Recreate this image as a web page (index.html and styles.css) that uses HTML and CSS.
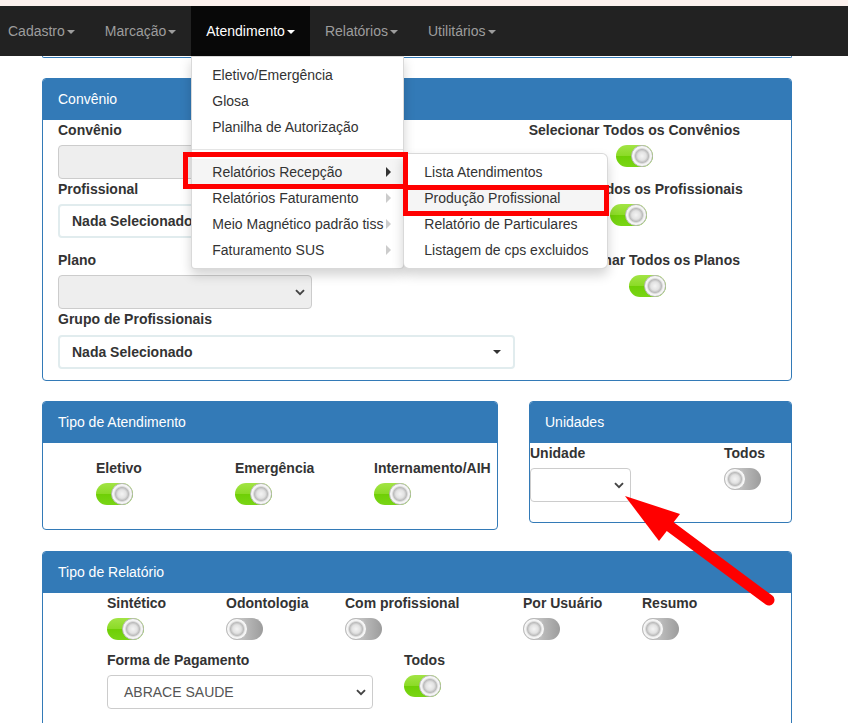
FILE: index.html
```html
<!DOCTYPE html>
<html lang="pt-BR">
<head>
<meta charset="utf-8">
<title>Atendimento - Produção Profissional</title>
<link rel="stylesheet" href="styles.css">
</head>
<body>
<div class="topstrip"></div>
<nav class="navbar">
  <ul class="nav">
    <li class="nav-item first"><a>Cadastro<span class="caret"></span></a></li>
    <li class="nav-item"><a>Marcação<span class="caret"></span></a></li>
    <li class="nav-item active"><a>Atendimento<span class="caret"></span></a>
      <ul class="dropdown">
        <li><a>Eletivo/Emergência</a></li>
        <li><a>Glosa</a></li>
        <li><a>Planilha de Autorização</a></li>
        <li class="divider"></li>
        <li class="sub hover"><a>Relatórios Recepção<span class="subcaret dark"></span></a>
          <ul class="dropdown submenu">
            <li><a>Lista Atendimentos</a></li>
            <li class="hover"><a>Produção Profissional</a></li>
            <li><a>Relatório de Particulares</a></li>
            <li><a>Listagem de cps excluidos</a></li>
          </ul>
        </li>
        <li class="sub"><a>Relatórios Faturamento<span class="subcaret"></span></a></li>
        <li class="sub"><a>Meio Magnético padrão tiss<span class="subcaret"></span></a></li>
        <li class="sub"><a>Faturamento SUS<span class="subcaret"></span></a></li>
      </ul>
    </li>
    <li class="nav-item"><a>Relatórios<span class="caret"></span></a></li>
    <li class="nav-item"><a>Utilitários<span class="caret"></span></a></li>
  </ul>
</nav>

<main class="page">
  <div class="panel-tail"></div>

  <section class="panel conv">
    <div class="panel-heading">Convênio</div>
    <div class="panel-body conv-body">
      <div class="conv-row r1">
        <div class="field">
          <label class="lbl">Convênio</label>
          <div class="control disabled w254"></div>
        </div>
        <div class="switch-block">
          <label class="lbl">Selecionar Todos os Convênios</label>
          <span class="toggle on"><span class="knob"></span></span>
        </div>
      </div>
      <div class="conv-row r2">
        <div class="field">
          <label class="lbl">Profissional</label>
          <div class="bs-select w457"><span>Nada Selecionado</span><span class="bs-caret"></span></div>
        </div>
        <div class="switch-block">
          <label class="lbl">Selecionar Todos os Profissionais</label>
          <span class="toggle on"><span class="knob"></span></span>
        </div>
      </div>
      <div class="conv-row r3">
        <div class="field">
          <label class="lbl">Plano</label>
          <div class="control disabled w254"><svg class="chev" width="10" height="7" viewBox="0 0 10 7"><path d="M1 1.2 L5 5.2 L9 1.2" fill="none" stroke="#444" stroke-width="1.9"/></svg></div>
        </div>
        <div class="switch-block">
          <label class="lbl">Selecionar Todos os Planos</label>
          <span class="toggle on"><span class="knob"></span></span>
        </div>
      </div>
      <div class="conv-row r4">
        <div class="field">
          <label class="lbl">Grupo de Profissionais</label>
          <div class="bs-select w457"><span>Nada Selecionado</span><span class="bs-caret"></span></div>
        </div>
      </div>
    </div>
  </section>

  <div class="panel-pair">
    <section class="panel atend">
      <div class="panel-heading">Tipo de Atendimento</div>
      <div class="panel-body atend-body">
        <div class="sw"><label class="lbl">Eletivo</label><span class="toggle on"><span class="knob"></span></span></div>
        <div class="sw"><label class="lbl">Emergência</label><span class="toggle on"><span class="knob"></span></span></div>
        <div class="sw"><label class="lbl">Internamento/AIH</label><span class="toggle on"><span class="knob"></span></span></div>
      </div>
    </section>
    <section class="panel unid">
      <div class="panel-heading">Unidades</div>
      <div class="panel-body unid-body">
        <div class="sw">
          <label class="lbl">Unidade</label>
          <div class="control w101"><svg class="chev" width="10" height="7" viewBox="0 0 10 7"><path d="M1 1.2 L5 5.2 L9 1.2" fill="none" stroke="#444" stroke-width="1.9"/></svg></div>
        </div>
        <div class="sw">
          <label class="lbl">Todos</label>
          <span class="toggle off"><span class="knob"></span></span>
        </div>
      </div>
    </section>
  </div>

  <section class="panel rel">
    <div class="panel-heading">Tipo de Relatório</div>
    <div class="panel-body rel-body">
      <div class="rel-row1">
        <div class="sw"><label class="lbl">Sintético</label><span class="toggle on"><span class="knob"></span></span></div>
        <div class="sw"><label class="lbl">Odontologia</label><span class="toggle off"><span class="knob"></span></span></div>
        <div class="sw"><label class="lbl">Com profissional</label><span class="toggle off"><span class="knob"></span></span></div>
        <div class="sw"><label class="lbl">Por Usuário</label><span class="toggle off"><span class="knob"></span></span></div>
        <div class="sw"><label class="lbl">Resumo</label><span class="toggle off"><span class="knob"></span></span></div>
      </div>
      <div class="rel-row2">
        <div class="sw pay">
          <label class="lbl">Forma de Pagamento</label>
          <div class="control w266 valued">ABRACE SAUDE<svg class="chev" width="10" height="7" viewBox="0 0 10 7"><path d="M1 1.2 L5 5.2 L9 1.2" fill="none" stroke="#444" stroke-width="1.9"/></svg></div>
        </div>
        <div class="sw">
          <label class="lbl">Todos</label>
          <span class="toggle on"><span class="knob"></span></span>
        </div>
      </div>
    </div>
  </section>
</main>

<div class="annot">
  <div class="redbox box1"></div>
  <div class="redbox box2"></div>
  <svg class="arrow" width="848" height="723" viewBox="0 0 848 723">
    <line x1="668" y1="525" x2="769" y2="600" stroke="#ff0000" stroke-width="11" stroke-linecap="round"/>
    <polygon points="625,496 680,514 659,541" fill="#ff0000"/>
  </svg>
</div>
</body>
</html>
```

FILE: styles.css
```css
* { box-sizing: border-box; }
html, body { margin: 0; padding: 0; background: #fff; }
body {
  font-family: "Liberation Sans", Arial, Helvetica, sans-serif;
  font-size: 14px;
  line-height: 20px;
  color: #333;
  height: 723px;
  overflow: hidden;
}
ul { list-style: none; margin: 0; padding: 0; }

.topstrip { height: 6px; background: #fcf1ee; }

.navbar {
  height: 50px;
  background: #222;
  position: relative;
  z-index: 10;
}
.nav { display: flex; height: 50px; }
.nav-item { position: relative; }
.nav-item > a {
  display: block;
  padding: 15px 15px;
  line-height: 20px;
  color: #9d9d9d;
}
.nav-item.first > a { padding-left: 8px; }
.nav-item.active > a { background: #080808; color: #fff; }
.caret {
  display: inline-block;
  width: 0; height: 0;
  margin-left: 2px;
  vertical-align: middle;
  border-top: 4px solid;
  border-left: 4px solid transparent;
  border-right: 4px solid transparent;
}

.dropdown {
  position: absolute;
  top: 100%;
  left: 0;
  width: 213px;
  padding: 5px 0;
  background: #fff;
  border: 1px solid rgba(0,0,0,.15);
  border-radius: 0 0 4px 4px;
  box-shadow: 0 6px 12px rgba(0,0,0,.175);
}
.dropdown li { position: relative; }
.dropdown li > a {
  display: flex;
  align-items: center;
  padding: 3px 20px;
  line-height: 20px;
  color: #333;
  white-space: nowrap;
}
.dropdown li.hover > a { background: #f5f5f5; }
.dropdown .divider { height: 1px; margin: 9px 0; background: #e5e5e5; }
.subcaret {
  margin-left: auto;
  margin-right: -8px;
  width: 0; height: 0;
  border-left: 5px solid #ccc;
  border-top: 5px solid transparent;
  border-bottom: 5px solid transparent;
}
.subcaret.dark { border-left-color: #333; }
.dropdown.submenu {
  top: -6px;
  left: 100%;
  width: 205px;
  border-radius: 0 6px 6px 6px;
}

.page { padding: 0 56px 0 42px; }
.panel-tail {
  height: 2px;
  border: 1px solid #337ab7;
  border-top: 0;
  border-radius: 0 0 4px 4px;
}
.panel {
  border: 1px solid #337ab7;
  border-radius: 4px;
  background: #fff;
}
.panel-heading {
  background: #337ab7;
  color: #fff;
  padding: 10px 15px;
  line-height: 20px;
  border-bottom: 1px solid transparent;
  border-radius: 3px 3px 0 0;
}
.lbl {
  display: block;
  font-weight: bold;
  line-height: 20px;
  margin-bottom: 5px;
  white-space: nowrap;
}

.control {
  height: 34px;
  border: 1px solid #ccc;
  border-radius: 4px;
  background: #fff;
  display: flex;
  align-items: center;
  justify-content: flex-end;
  padding: 0 6px;
  color: #555;
}
.control.disabled { background: #eee; }
.control.valued { justify-content: space-between; padding-left: 16px; }
.w254 { width: 254px; }
.w101 { width: 101px; }
.w266 { width: 266px; }
.w457 { width: 457px; }
.chev { display: block; }

.bs-select {
  height: 34px;
  border: 2px solid #e1ecee;
  border-radius: 4px;
  display: flex;
  align-items: center;
  justify-content: space-between;
  padding: 0 12px 0 12px;
  font-weight: bold;
}
.bs-caret {
  width: 0; height: 0;
  border-top: 4px solid #333;
  border-left: 4px solid transparent;
  border-right: 4px solid transparent;
}

.toggle {
  display: flex;
  width: 37px;
  height: 22px;
  border-radius: 11px;
}
.toggle.on {
  justify-content: flex-end;
  background: linear-gradient(#a2e445 0%, #8cdb27 48%, #6fcf05 52%, #79d516 100%);
}
.toggle.off {
  justify-content: flex-start;
  background: linear-gradient(to right, #dedede 0%, #b5b5b5 60%, #9c9c9c 100%);
}
.knob {
  width: 22px;
  height: 22px;
  border-radius: 50%;
  border: 1px solid #b9b9b9;
  background: radial-gradient(circle at 50% 50%, #f4f4f4 0, #e2e2e2 30%, #bcbcbc 46%, #f2f2f2 58%, #ffffff 80%, #e6e6e6 100%);
}

/* Convênio */
.conv { margin-top: 20px; }
.conv-body { padding: 0 0 11px 0; }
.conv-row {
  display: flex;
  justify-content: space-between;
  align-items: flex-start;
  padding: 0 51px 0 15px;
}
.r2 { margin-bottom: 12px; }
.r4 .lbl { margin-bottom: 6px; }
.switch-block {
  display: flex;
  flex-direction: column;
  align-items: center;
}

/* pair */
.panel-pair {
  display: flex;
  align-items: flex-start;
  justify-content: space-between;
  margin-top: 20px;
}
.atend { width: 456px; }
.atend-body {
  display: grid;
  grid-template-columns: 139px 139px 139px;
  padding: 15px 0 24px 53px;
}
.unid { width: 263px; }
.unid-body {
  display: flex;
  justify-content: space-between;
  padding: 0 26px 20px 0;
}

/* Relatório */
.rel { margin-top: 21px; }
.rel-body { padding: 0 0 30px 64px; }
.rel-row1 {
  display: grid;
  grid-template-columns: 119px 119px 178px 119px 119px;
}
.rel-row2 {
  display: flex;
  margin-top: 10px;
}
.pay { width: 297px; }

/* annotations */
.annot {
  position: absolute;
  left: 0; top: 0;
  width: 848px; height: 723px;
  pointer-events: none;
  z-index: 20;
}
.redbox { position: absolute; border: 5px solid #ff0000; }
.box1 { left: 183px; top: 152px; width: 225px; height: 37px; }
.box2 { left: 403px; top: 185px; width: 206px; height: 31px; }
.arrow { position: absolute; left: 0; top: 0; }
```
